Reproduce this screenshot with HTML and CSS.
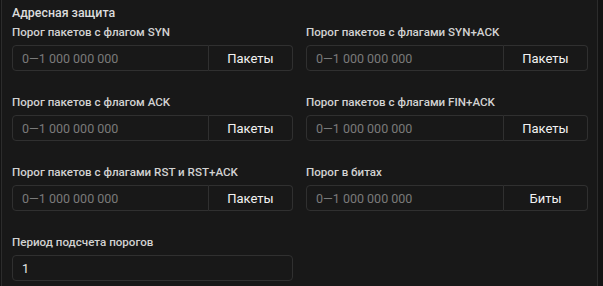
FILE: index.html
```html
<!DOCTYPE html>
<html lang="ru">
<head>
<meta charset="utf-8">
<link rel="stylesheet" href="styles.css">
</head>
<body>
<div class="panel">
  <div class="title">Адресная защита</div>
  <div class="grid">
    <div class="field">
      <div class="label">Порог пакетов с флагом SYN</div>
      <div class="group"><input class="input" placeholder="0—1 000 000 000"><button class="btn">Пакеты</button></div>
    </div>
    <div class="field">
      <div class="label">Порог пакетов с флагами SYN+ACK</div>
      <div class="group"><input class="input" placeholder="0—1 000 000 000"><button class="btn">Пакеты</button></div>
    </div>
    <div class="field">
      <div class="label">Порог пакетов с флагом ACK</div>
      <div class="group"><input class="input" placeholder="0—1 000 000 000"><button class="btn">Пакеты</button></div>
    </div>
    <div class="field">
      <div class="label">Порог пакетов с флагами FIN+ACK</div>
      <div class="group"><input class="input" placeholder="0—1 000 000 000"><button class="btn">Пакеты</button></div>
    </div>
    <div class="field">
      <div class="label">Порог пакетов с флагами RST и RST+ACK</div>
      <div class="group"><input class="input" placeholder="0—1 000 000 000"><button class="btn">Пакеты</button></div>
    </div>
    <div class="field">
      <div class="label">Порог в битах</div>
      <div class="group"><input class="input" placeholder="0—1 000 000 000"><button class="btn">Биты</button></div>
    </div>
    <div class="field">
      <div class="label">Период подсчета порогов</div>
      <div class="group"><input class="input single" value="1"></div>
    </div>
  </div>
</div>
</body>
</html>
```
FILE: styles.css
```css
html, body {
  margin: 0;
  padding: 0;
  background: #131313;
  height: 100%;
}
body {
  font-family: Roboto, "Noto Sans", sans-serif;
  overflow: hidden;
}
.panel {
  margin-left: 1px;
  width: 597px;
  height: 100%;
  box-sizing: border-box;
  background: #181818;
  border-left: 1px solid #2c2c2c;
  border-right: 1px solid #2c2c2c;
  padding: 4px 11px 0 10px;
}
.title {
  font-size: 12.4px;
  font-weight: 500;
  color: #dcdcdc;
  line-height: 18px;
  margin-bottom: 2px;
}
.grid {
  display: grid;
  grid-template-columns: 281px 282px;
  column-gap: 13px;
  row-gap: 23px;
}
.label {
  font-size: 11.6px;
  font-weight: 500;
  color: #d2d2d2;
  line-height: 16px;
  margin-bottom: 5px;
}
.group {
  display: flex;
  height: 26px;
}
.input {
  flex: 1;
  min-width: 0;
  box-sizing: border-box;
  height: 26px;
  background: #181818;
  border: 1px solid #303030;
  border-radius: 4px 0 0 4px;
  padding: 0 9px;
  font-family: Roboto, sans-serif;
  font-size: 12.5px;
  color: #e6e6e6;
  outline: none;
}
.input::placeholder {
  color: #7a7a7a;
}
.input.single {
  border-radius: 4px;
}
.btn {
  width: 84px;
  box-sizing: border-box;
  height: 26px;
  background: #181818;
  border: 1px solid #303030;
  border-left: none;
  border-radius: 0 4px 4px 0;
  font-family: Roboto, sans-serif;
  font-size: 13px;
  color: #f2f2f2;
  padding: 0;
}
```
